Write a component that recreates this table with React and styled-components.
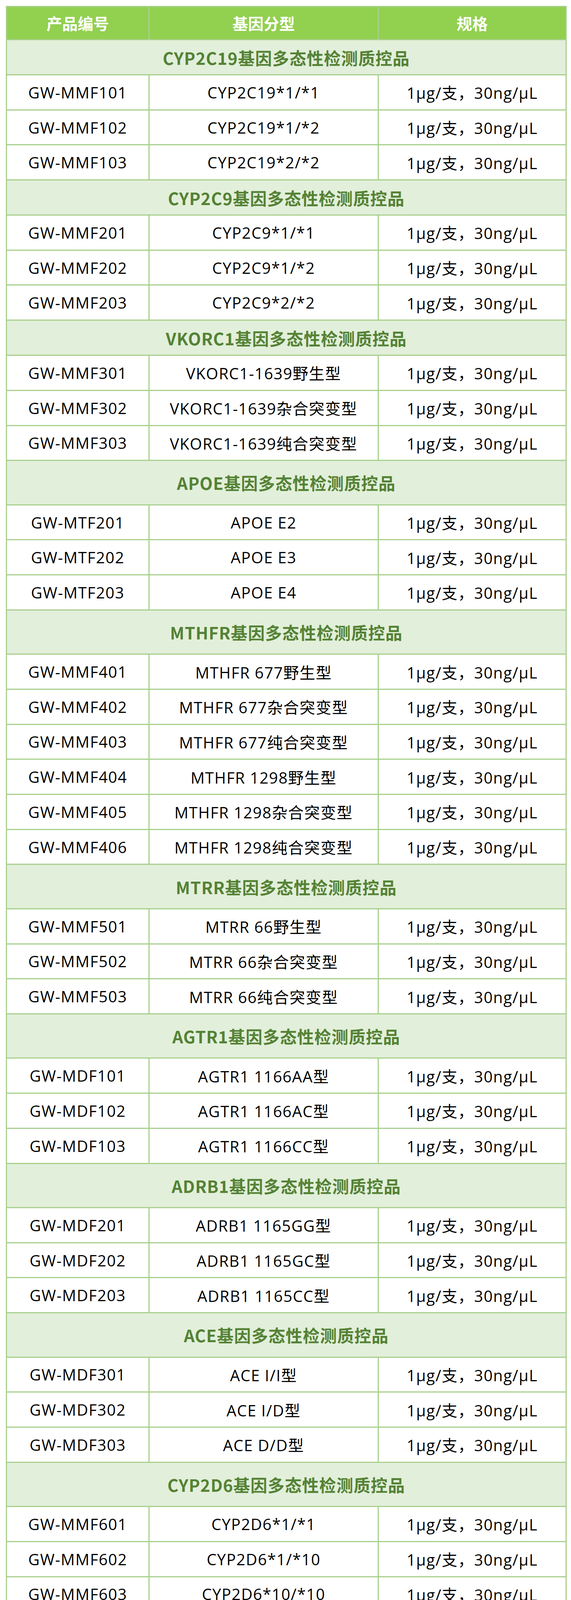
import React from "react";
import styled, { createGlobalStyle } from "styled-components";

const GlobalStyle = createGlobalStyle`
  html, body {
    margin: 0;
    padding: 0;
    background: #ffffff;
  }
  body {
    font-family: "Open Sans", "Noto Sans CJK SC", sans-serif;
  }
`;

const LINE = "#a9d08e";

const Page = styled.div`
  padding: 15px 0 0 15px;
`;

const Table = styled.div`
  width: 1436px;
  box-sizing: border-box;
  border: 3px solid ${LINE};
  border-bottom: none;
  display: flex;
  flex-direction: column;
`;

const Row = styled.div`
  display: grid;
  grid-template-columns: 365px 587px 1fr;
  box-sizing: border-box;
  height: ${(p) => p.$h}px;
  border-bottom: 3px solid ${LINE};
  background: ${(p) => p.$bg || "#ffffff"};
`;

const Cell = styled.div`
  display: flex;
  align-items: center;
  justify-content: center;
  box-sizing: border-box;
  border-right: 3px solid ${LINE};
  font-family: "Open Sans", "Noto Sans CJK SC", sans-serif;
  font-size: 40px;
  letter-spacing: 1.5px;
  color: #000000;
  white-space: nowrap;
  &:last-child {
    border-right: none;
  }
`;

const HeadCell = styled(Cell)`
  font-family: "Noto Sans CJK SC", sans-serif;
  font-weight: 700;
  color: #ffffff;
  letter-spacing: 0;
`;

const SectionRow = styled.div`
  display: flex;
  align-items: center;
  justify-content: center;
  box-sizing: border-box;
  height: ${(p) => p.$h}px;
  border-bottom: 3px solid ${LINE};
  background: #e2efda;
  font-family: "Noto Sans CJK SC", sans-serif;
  font-weight: 700;
  font-size: 43px;
  letter-spacing: 1px;
  color: #548235;
  white-space: nowrap;
`;

const SPEC = "1µg/支，30ng/µL";

const sections = [
  {
    title: "CYP2C19基因多态性检测质控品",
    tall: false,
    rows: [
      ["GW-MMF101", "CYP2C19*1/*1"],
      ["GW-MMF102", "CYP2C19*1/*2"],
      ["GW-MMF103", "CYP2C19*2/*2"],
    ],
  },
  {
    title: "CYP2C9基因多态性检测质控品",
    tall: false,
    rows: [
      ["GW-MMF201", "CYP2C9*1/*1"],
      ["GW-MMF202", "CYP2C9*1/*2"],
      ["GW-MMF203", "CYP2C9*2/*2"],
    ],
  },
  {
    title: "VKORC1基因多态性检测质控品",
    tall: false,
    rows: [
      ["GW-MMF301", "VKORC1-1639野生型"],
      ["GW-MMF302", "VKORC1-1639杂合突变型"],
      ["GW-MMF303", "VKORC1-1639纯合突变型"],
    ],
  },
  {
    title: "APOE基因多态性检测质控品",
    tall: true,
    rows: [
      ["GW-MTF201", "APOE E2"],
      ["GW-MTF202", "APOE E3"],
      ["GW-MTF203", "APOE E4"],
    ],
  },
  {
    title: "MTHFR基因多态性检测质控品",
    tall: true,
    rows: [
      ["GW-MMF401", "MTHFR 677野生型"],
      ["GW-MMF402", "MTHFR 677杂合突变型"],
      ["GW-MMF403", "MTHFR 677纯合突变型"],
      ["GW-MMF404", "MTHFR 1298野生型"],
      ["GW-MMF405", "MTHFR 1298杂合突变型"],
      ["GW-MMF406", "MTHFR 1298纯合突变型"],
    ],
  },
  {
    title: "MTRR基因多态性检测质控品",
    tall: true,
    rows: [
      ["GW-MMF501", "MTRR 66野生型"],
      ["GW-MMF502", "MTRR 66杂合突变型"],
      ["GW-MMF503", "MTRR 66纯合突变型"],
    ],
  },
  {
    title: "AGTR1基因多态性检测质控品",
    tall: true,
    rows: [
      ["GW-MDF101", "AGTR1 1166AA型"],
      ["GW-MDF102", "AGTR1 1166AC型"],
      ["GW-MDF103", "AGTR1 1166CC型"],
    ],
  },
  {
    title: "ADRB1基因多态性检测质控品",
    tall: true,
    rows: [
      ["GW-MDF201", "ADRB1 1165GG型"],
      ["GW-MDF202", "ADRB1 1165GC型"],
      ["GW-MDF203", "ADRB1 1165CC型"],
    ],
  },
  {
    title: "ACE基因多态性检测质控品",
    tall: true,
    rows: [
      ["GW-MDF301", "ACE I/I型"],
      ["GW-MDF302", "ACE I/D型"],
      ["GW-MDF303", "ACE D/D型"],
    ],
  },
  {
    title: "CYP2D6基因多态性检测质控品",
    tall: true,
    rows: [
      ["GW-MMF601", "CYP2D6*1/*1"],
      ["GW-MMF602", "CYP2D6*1/*10"],
      ["GW-MMF603", "CYP2D6*10/*10"],
    ],
  },
  {
    title: "CYP3A5基因多态性检测质控品",
    tall: true,
    rows: [
      ["GW-MMF701", "CYP3A5*1/*1"],
      ["GW-MMF702", "CYP3A5*1/*3"],
      ["GW-MMF703", "CYP3A5*3/*3"],
    ],
  },
  {
    title: "NPPA基因多态性检测质控品",
    tall: true,
    rows: [
      ["GW-MDF401", "NPPA 2238TT"],
      ["GW-MDF402", "NPPA 2238TC"],
      ["GW-MDF403", "NPPA 2238CC"],
    ],
  },
  {
    title: "HLA-B等位基因检测质控品",
    tall: true,
    rows: [
      ["GW-MDF501", "HLA-B*1502"],
      ["GW-MDF502", "HLA-B*5801"],
      ["GW-MDF503", "HLA-B*5701"],
    ],
  },
];

export default function App() {
  return (
    <>
      <GlobalStyle />
      <Page>
        <Table>
          <Row $h={85} $bg="#92d050">
            <HeadCell>产品编号</HeadCell>
            <HeadCell>基因分型</HeadCell>
            <HeadCell>规格</HeadCell>
          </Row>
          {sections.map((s) => (
            <React.Fragment key={s.title}>
              <SectionRow $h={s.tall ? 113.5 : 90}>{s.title}</SectionRow>
              {s.rows.map(([code, type]) => (
                <Row key={code} $h={89.7}>
                  <Cell>{code}</Cell>
                  <Cell>{type}</Cell>
                  <Cell>{SPEC}</Cell>
                </Row>
              ))}
            </React.Fragment>
          ))}
        </Table>
      </Page>
    </>
  );
}
